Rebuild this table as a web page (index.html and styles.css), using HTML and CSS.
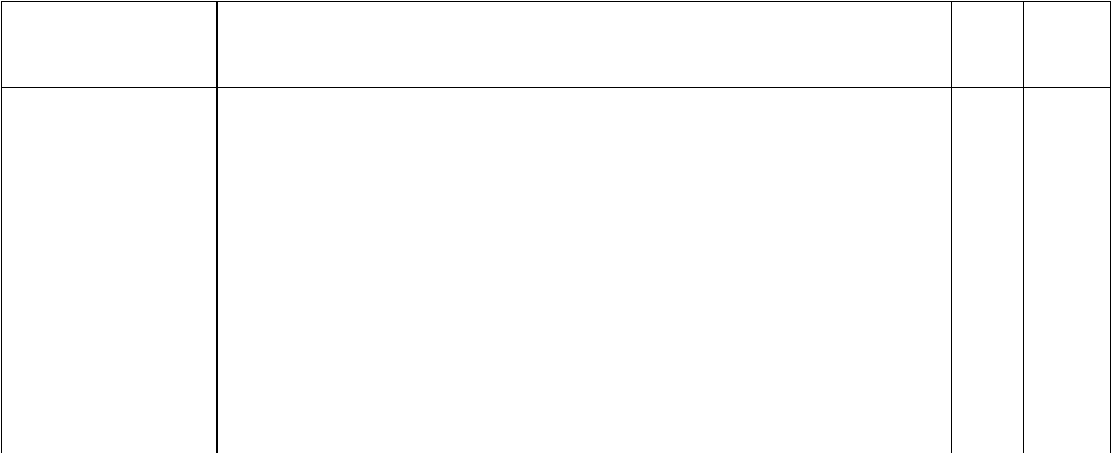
FILE: index.html
```html
<!DOCTYPE html>
<html lang="en">
<head>
    <meta charset="UTF-8">
    <title>Table</title>
    <link rel="stylesheet" href="styles.css">
</head>
<body>
    <!-- Boş tablo: başlık satırı + gövde satırı -->
    <div class="sheet">
        <div class="cell head first"></div>
        <div class="cell head"></div>
        <div class="cell head"></div>
        <div class="cell head"></div>

        <div class="cell first"></div>
        <div class="cell"></div>
        <div class="cell"></div>
        <div class="cell"></div>
    </div>
</body>
</html>
```

FILE: styles.css
```css
html, body {
    margin: 0;
    padding: 0;
    background: #fff;
    overflow: hidden;
    height: 100%;
}

body {
    padding: 1px 0 0 1px;
    box-sizing: border-box;
    font-family: 'Liberation Sans', Arial, sans-serif;
}

.sheet {
    display: grid;
    grid-template-columns: 216px 734px 72px 87px;
    grid-template-rows: 86px 400px;
    border-left: 1px solid #000;
    border-top: 1px solid #000;
    width: max-content;
}

.cell {
    box-sizing: border-box;
    border-right: 1px solid #000;
}

.cell.first {
    border-right-width: 2px;
}

.cell.head {
    border-bottom: 1px solid #000;
}
```
